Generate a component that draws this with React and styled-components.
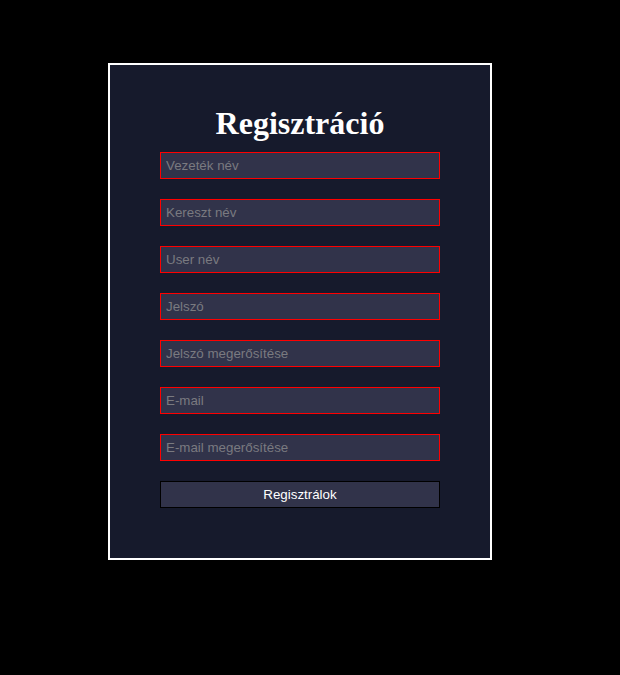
import React from "react";
import styled, { createGlobalStyle } from "styled-components";

const GlobalStyle = createGlobalStyle`
  html, body {
    background-color: #000;
  }
  body {
    margin: 8px;
    font-family: "Liberation Sans", Arial, sans-serif;
  }
`;

const PageContainer = styled.div`
  display: flex;
  justify-content: center;
  padding: 55px 20px 0 0;
`;

const Card = styled.form`
  width: 280px;
  padding: 40px 50px 50px;
  background-color: #161a2c;
  border: 2px solid #fff;
  display: flex;
  flex-direction: column;
`;

const Title = styled.h1`
  margin: 0 0 11px;
  font-family: "Liberation Serif", "Times New Roman", serif;
  font-size: 32px;
  font-weight: bold;
  line-height: 36px;
  text-align: center;
  color: #fff;
`;

const Input = styled.input`
  box-sizing: border-box;
  width: 280px;
  height: 27px;
  margin: 0 0 20px;
  padding: 0 5px;
  border: 1px solid #ff0000;
  background-color: #31334a;
  color: #e6e6e6;
  font-family: "Liberation Sans", Arial, sans-serif;
  font-size: 13.333px;
  outline: none;

  &::placeholder {
    color: #7a7a80;
  }
`;

const SubmitButton = styled.button`
  box-sizing: border-box;
  width: 280px;
  height: 27px;
  margin: 0;
  padding: 0;
  border: 1px solid #000;
  background-color: #31334a;
  color: #fff;
  font-family: "Liberation Sans", Arial, sans-serif;
  font-size: 13.333px;
  cursor: pointer;
`;

const fields = [
  { name: "lastName", type: "text", placeholder: "Vezeték név" },
  { name: "firstName", type: "text", placeholder: "Kereszt név" },
  { name: "userName", type: "text", placeholder: "User név" },
  { name: "password", type: "password", placeholder: "Jelszó" },
  { name: "passwordConfirm", type: "password", placeholder: "Jelszó megerősítése" },
  { name: "email", type: "email", placeholder: "E-mail" },
  { name: "emailConfirm", type: "email", placeholder: "E-mail megerősítése" },
];

const App = () => {
  const handleSubmit = (e) => {
    e.preventDefault();
  };

  return (
    <>
      <GlobalStyle />
      <PageContainer>
        <Card onSubmit={handleSubmit}>
          <Title>Regisztráció</Title>
          {fields.map((field) => (
            <Input
              key={field.name}
              name={field.name}
              type={field.type}
              placeholder={field.placeholder}
            />
          ))}
          <SubmitButton type="submit">Regisztrálok</SubmitButton>
        </Card>
      </PageContainer>
    </>
  );
};

export default App;
